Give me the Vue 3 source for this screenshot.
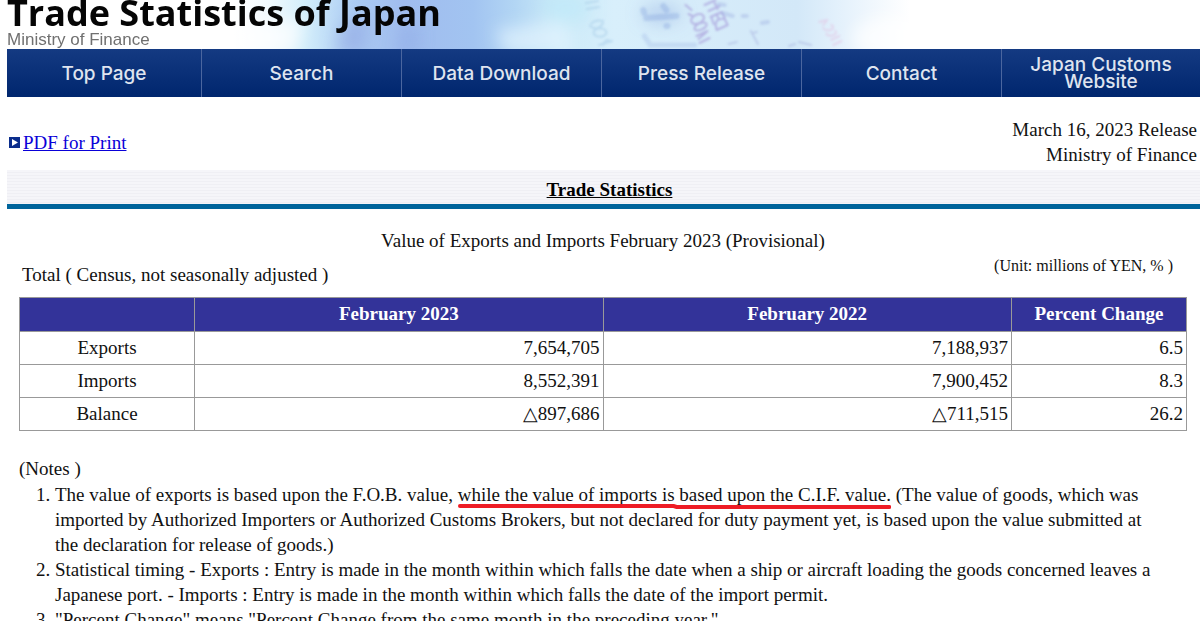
<script setup>
const navItems = ['Top Page', 'Search', 'Data Download', 'Press Release', 'Contact', 'Japan Customs Website']

const columns = ['February 2023', 'February 2022', 'Percent Change']

const rows = [
  { label: 'Exports', values: ['7,654,705', '7,188,937', '6.5'] },
  { label: 'Imports', values: ['8,552,391', '7,900,452', '8.3'] },
  { label: 'Balance', values: ['△897,686', '△711,515', '26.2'] },
]
</script>

<template>
  <div class="page">
    <header class="banner">
      <svg class="art" viewBox="0 0 700 49" preserveAspectRatio="none" aria-hidden="true">
        <defs>
          <linearGradient id="sky" x1="0" x2="1" y1="0" y2="0">
            <stop offset="0" stop-color="#ffffff" />
            <stop offset="0.05" stop-color="#f1fafe" />
            <stop offset="0.1" stop-color="#d3eefb" />
            <stop offset="0.17" stop-color="#adcdf3" />
            <stop offset="0.24" stop-color="#a0bcee" />
            <stop offset="0.34" stop-color="#a2c4f1" />
            <stop offset="0.4" stop-color="#b3d6f4" />
            <stop offset="0.46" stop-color="#cbeaf8" />
            <stop offset="0.54" stop-color="#d8effb" />
            <stop offset="0.8" stop-color="#d3e8f8" />
            <stop offset="0.87" stop-color="#e6f2fc" />
            <stop offset="0.96" stop-color="#ffffff" />
          </linearGradient>
          <filter id="soft" x="-50%" y="-50%" width="200%" height="200%">
            <feGaussianBlur stdDeviation="8" />
          </filter>
          <filter id="ink" x="-20%" y="-20%" width="140%" height="140%">
            <feGaussianBlur stdDeviation="1" />
          </filter>
        </defs>
        <rect width="700" height="49" fill="url(#sky)" />
        <g filter="url(#soft)">
          <path d="M0 20 L70 20 L60 54 L0 54 Z" fill="#ffffff" opacity="0.7" />
          <path d="M108 22 L134 16 L130 54 L100 54 Z" fill="#8ea0e2" opacity="0.5" />
          <path d="M170 26 L184 26 L182 54 L164 54 Z" fill="#86a6e4" opacity="0.4" />
          <path d="M260 30 L330 20 L340 54 L270 54 Z" fill="#e2f4fd" opacity="0.7" />
          <ellipse cx="330" cy="8" rx="24" ry="16" fill="#bfe8f8" opacity="0.7" />
          <ellipse cx="425" cy="14" rx="20" ry="11" fill="#a3bee8" opacity="0.5" />
          <ellipse cx="655" cy="38" rx="40" ry="22" fill="#ffffff" opacity="0.7" />
        </g>
        <g filter="url(#ink)" fill="none" stroke-linecap="round" stroke-linejoin="round">
          <path d="M350 3 l12 -2 M351 9 l12 -2 M355 24 q4 -5 12 -3 M354 26 q8 6 13 -3 M358 34 a6 4 0 1 0 12 -3 a6 4 0 1 0 -12 3 M363 45 l13 -4 M367 45 q2 -7 7 -4" stroke="#a3c9e8" stroke-width="2" opacity="0.5" />
          <path d="M407 10 l1 3 M427 6 l3 4 M410 18 l30 -2 M430 26 h1" stroke="#7c9bdb" stroke-width="6" opacity="0.3" />
          <path d="M416 45 h42 M408 36 l6 9" stroke="#8fa8e0" stroke-width="5" opacity="0.25" />
          <path d="M449 5 l6 5 M452 14 l4 2 M455 22 a6 4 -25 1 0 12 -6 a6 4 -25 1 0 -12 6 M458 29 a6 3 -25 1 0 12 -5 a6 3 -25 1 0 -12 5 M460 36 l11 -5 M462 39 l8 -7 M463 43 l10 -5" stroke="#9781cf" stroke-width="2" opacity="0.5" />
          <path d="M468 5 l11 -5 M472 11 l11 -5 M478 3 l3 6 M474 17 l11 -5 l3 6 M480 14 l2 5 M475 18 l2 6 M480 30 l11 -5 l-3 -6 q-9 -1 -9 6 Z" stroke="#9b88d3" stroke-width="2" opacity="0.55" />
          <path d="M486 13 l10 3 M506 16 l4 0 M525 23 l6 -1 M482 4 l6 1" stroke="#9daee0" stroke-width="4" opacity="0.4" />
          <path d="M514 31 l7 13 M516 33 l4 -1 M552 46 l6 -2 M562 42 l12 3 M492 44 l8 -2" stroke="#a7b4e0" stroke-width="2" opacity="0.5" />
          <path d="M582 22 l8 -2 l-4 5 M586 28 a5 3 0 1 0 8 -3 M589 34 a5 3 0 1 0 9 -3 M594 40 l8 -4 M596 45 l8 -4" stroke="#e3bfe2" stroke-width="2" opacity="0.5" />
        </g>
      </svg>
      <h1 class="site-title">Trade Statistics of Japan</h1>
      <p class="ministry">Ministry of Finance</p>
    </header>

    <nav class="nav" aria-label="Main">
      <a v-for="item in navItems" :key="item" class="nav-link" href="#"><span>{{ item }}</span></a>
    </nav>

    <main>
      <div class="release">
        <a class="pdf" href="#">
          <svg class="pdf-icon" viewBox="0 0 11 11" aria-hidden="true">
            <rect width="11" height="11" fill="#0b2d8c" />
            <path d="M3 2 L9 5.5 L3 9 Z" fill="#ffffff" />
          </svg>
          <span class="pdf-text">PDF for Print</span>
        </a>
        <p class="issued">March 16, 2023 Release<br />Ministry of Finance</p>
      </div>

      <h2 class="band">Trade Statistics</h2>

      <section class="stats">
        <p class="caption">Value of Exports and Imports February 2023 (Provisional)</p>
        <div class="scope">
          <p>Total ( Census, not seasonally adjusted )</p>
          <p class="unit">(Unit: millions of YEN, % )</p>
        </div>
        <table class="table">
          <thead>
            <tr>
              <td class="corner"></td>
              <th v-for="(column, i) in columns" :key="column" scope="col" :class="{ narrow: i === 2 }">{{ column }}</th>
            </tr>
          </thead>
          <tbody>
            <tr v-for="row in rows" :key="row.label">
              <th scope="row">{{ row.label }}</th>
              <td v-for="value in row.values" :key="value">{{ value }}</td>
            </tr>
          </tbody>
        </table>

        <p class="notes-title">(Notes )</p>
        <ol class="notes">
          <li>
            The value of exports is based upon the F.O.B. value,
            <span class="marked">while the value of imports is based upon the C.I.F. value.<svg class="stroke" viewBox="0 0 450 8" preserveAspectRatio="none" aria-hidden="true"><path d="M2 3 H224 L227 4 H448" fill="none" stroke="#ee1c25" stroke-width="4" stroke-linecap="round" /></svg></span>
            (The value of goods, which was imported by Authorized Importers or Authorized Customs Brokers, but not declared for duty payment yet, is based upon the value submitted at the declaration for release of goods.)
          </li>
          <li>
            Statistical timing - Exports : Entry is made in the month within which falls the date when a ship or aircraft loading the goods concerned leaves a Japanese port. - Imports : Entry is made in the month within which falls the date of the import permit.
          </li>
          <li>"Percent Change" means "Percent Change from the same month in the preceding year."</li>
        </ol>
      </section>
    </main>
  </div>
</template>

<style>
html {
  overflow: hidden;
}

body {
  margin: 0;
  background: #ffffff;
}
</style>

<style scoped>
.page {
  padding-left: 7px;
  color: #111111;
  font-family: "Liberation Serif", "Times New Roman", serif;
  font-size: 19px;
  line-height: 25px;
}

h1,
h2,
p,
ol {
  margin: 0;
}

.banner {
  position: relative;
  display: flex;
  flex-direction: column;
  justify-content: flex-end;
  height: 49px;
  overflow: hidden;
}

.art {
  position: absolute;
  top: 0;
  left: 19%;
  width: 59%;
  height: 100%;
}

.site-title {
  position: relative;
  color: #050505;
  font-family: "Open Sans", sans-serif;
  font-size: 36px;
  font-weight: 700;
  line-height: 36px;
  white-space: nowrap;
}

.ministry {
  position: relative;
  color: #707070;
  font-family: "Liberation Sans", Arial, sans-serif;
  font-size: 17px;
  line-height: 18px;
}

.nav {
  display: grid;
  grid-template-columns: 195fr 200fr 200fr 200fr 200fr 198fr;
  height: 48px;
  background: linear-gradient(#143a82, #00266e);
}

.nav-link {
  display: flex;
  align-items: center;
  justify-content: center;
  padding: 0 24px;
  border-right: 1px solid #4b669f;
  color: #dfe4ef;
  font-family: Inter, sans-serif;
  font-size: 19px;
  font-weight: 500;
  line-height: 17px;
  text-align: center;
  text-decoration: none;
}

.nav-link:last-child {
  border-right: 0;
}

.release {
  display: flex;
  align-items: center;
  justify-content: space-between;
  padding: 20px 3px 3px 2px;
}

.pdf {
  display: flex;
  align-items: center;
  gap: 3px;
  color: #0a00d8;
  text-decoration: none;
}

.pdf-icon {
  width: 11px;
  height: 11px;
}

.pdf-text {
  text-decoration: underline;
}

.issued {
  text-align: right;
}

.band {
  padding: 7px 0 2px 12px;
  border-bottom: 5px solid #00659c;
  background: repeating-linear-gradient(#f5f5f9 0 2px, #efeff4 2px 3px);
  color: #000000;
  font-size: 19px;
  font-weight: 700;
  text-align: center;
  text-decoration: underline;
}

.stats {
  padding: 19px 13px 0 12px;
}

.caption {
  text-align: center;
}

.scope {
  display: flex;
  align-items: flex-start;
  justify-content: space-between;
  padding: 4px 14px 10px 3px;
}

.scope p {
  padding-top: 5px;
}

.scope .unit {
  padding: 0;
  font-size: 16px;
  line-height: 17px;
}

.table {
  width: 100%;
  border-collapse: collapse;
  table-layout: fixed;
}

.table th,
.table td {
  box-sizing: border-box;
  padding: 3px 3px 4px;
  border: 1px solid #999999;
  line-height: 25px;
  text-align: right;
}

.table thead th,
.table .corner {
  padding: 3px 3px 5px;
  background: #333399;
  color: #ffffff;
  text-align: center;
}

.table .corner,
.table .narrow {
  width: 15%;
}

.table tbody th {
  font-weight: 400;
  text-align: center;
}

.notes-title {
  margin-top: 25px;
}

.notes {
  margin-top: 1px;
  padding: 0 24px 0 36px;
}

.marked {
  position: relative;
}

.stroke {
  position: absolute;
  left: 0;
  bottom: -6px;
  width: 100%;
  height: 8px;
}
</style>
